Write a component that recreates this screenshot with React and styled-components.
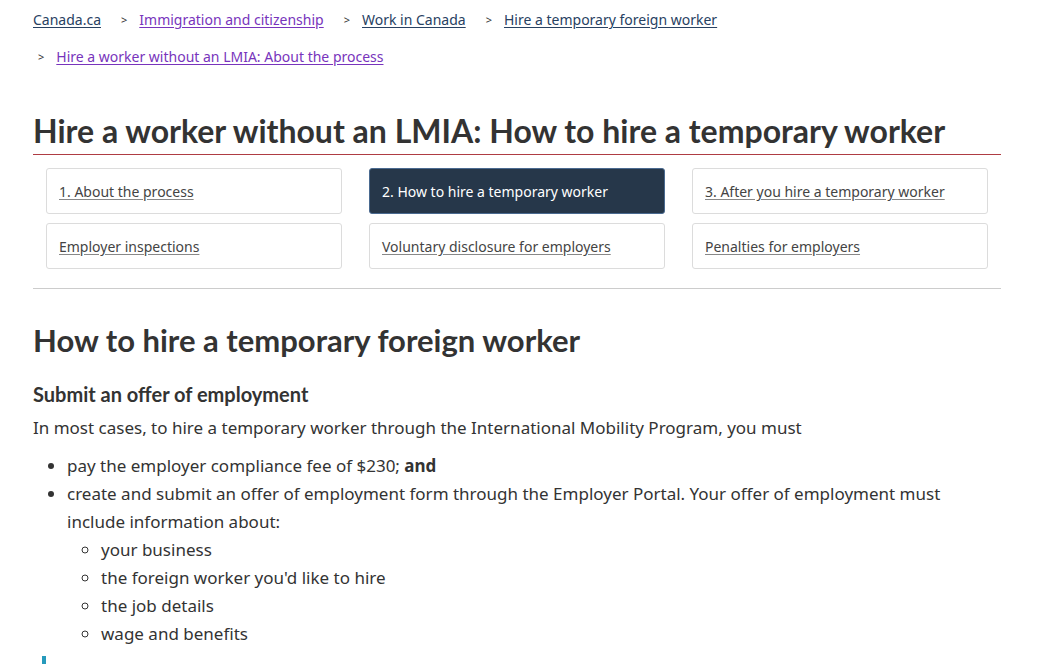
import React from 'react';
import styled, { createGlobalStyle } from 'styled-components';

const GlobalStyle = createGlobalStyle`
  body {
    margin: 0;
    background: #fff;
    font-family: "Noto Sans", "Liberation Sans", sans-serif;
    color: #333;
  }
`;

const Page = styled.div`
  width: 968px;
  margin-left: 33px;
  padding-top: 10px;
`;

const Breadcrumbs = styled.ol`
  list-style: none;
  margin: 0;
  padding: 0;
  display: flex;
  flex-wrap: wrap;
  column-gap: 15px;
  row-gap: 17px;
  font-size: 14px;
  line-height: 20px;
`;

const Crumb = styled.li`
  display: flex;
  align-items: center;
  &:not(:first-child)::before {
    content: '>';
    color: #333;
    font-size: 11px;
    margin: 0 12px 0 5px;
  }
  a {
    color: ${p => (p.visited ? '#7834bc' : '#284162')};
    text-decoration: underline;
    text-underline-offset: 2px;
  }
`;

const Title = styled.h1`
  font-family: Lato, "Noto Sans", sans-serif;
  font-weight: 700;
  font-size: 32px;
  line-height: 38px;
  color: #333;
  margin: 45px 0 0;
  padding-bottom: 4px;
  border-bottom: 1px solid #af3c43;
`;

const TabGrid = styled.div`
  display: grid;
  grid-template-columns: repeat(3, 1fr);
  column-gap: 27px;
  row-gap: 9px;
  margin: 13px 13px 0;
`;

const Tab = styled.a`
  display: flex;
  align-items: center;
  height: 46px;
  box-sizing: border-box;
  padding: 0 12px;
  font-size: 14px;
  border-radius: 3px;
  border: 1px solid ${p => (p.active ? '#4a6a90' : '#dcdcdc')};
  background: ${p => (p.active ? '#26374a' : '#fff')};
  color: ${p => (p.active ? '#fff' : '#444')};
  text-decoration: ${p => (p.active ? 'none' : 'underline')};
  text-decoration-color: #888;
  text-underline-offset: 2px;
`;

const Rule = styled.hr`
  border: 0;
  border-top: 1px solid #ccc;
  margin: 19px 0 0;
`;

const Heading = styled.h2`
  font-family: Lato, "Noto Sans", sans-serif;
  font-weight: 700;
  font-size: 31px;
  line-height: 38px;
  color: #333;
  margin: 32px 0 0;
`;

const SubHeading = styled.h3`
  font-family: Lato, "Noto Sans", sans-serif;
  font-weight: 700;
  font-size: 20px;
  line-height: 24px;
  color: #333;
  margin: 23px 0 0;
`;

const Para = styled.p`
  font-size: 17px;
  line-height: 28px;
  margin: 8px 0 0;
`;

const List = styled.ul`
  margin: ${p => (p.nested ? '0' : '10px 0 0')};
  padding-left: 34px;
  list-style: ${p => (p.nested ? 'circle' : 'disc')};
  font-size: 17px;
  line-height: 28px;
`;

const Item = styled.li`
  padding-left: 0;
`;

const InfoBox = styled.div`
  margin: 8px 0 0 9px;
  border-left: 4px solid #269abc;
  height: 40px;
`;

export default function App() {
  return (
    <Page>
      <GlobalStyle />
      <Breadcrumbs>
        <Crumb><a href="#">Canada.ca</a></Crumb>
        <Crumb visited><a href="#">Immigration and citizenship</a></Crumb>
        <Crumb><a href="#">Work in Canada</a></Crumb>
        <Crumb><a href="#">Hire a temporary foreign worker</a></Crumb>
        <Crumb visited><a href="#">Hire a worker without an LMIA: About the process</a></Crumb>
      </Breadcrumbs>

      <Title>Hire a worker without an LMIA: How to hire a temporary worker</Title>

      <TabGrid>
        <Tab href="#">1. About the process</Tab>
        <Tab active>2. How to hire a temporary worker</Tab>
        <Tab href="#">3. After you hire a temporary worker</Tab>
        <Tab href="#">Employer inspections</Tab>
        <Tab href="#">Voluntary disclosure for employers</Tab>
        <Tab href="#">Penalties for employers</Tab>
      </TabGrid>

      <Rule />

      <Heading>How to hire a temporary foreign worker</Heading>
      <SubHeading>Submit an offer of employment</SubHeading>
      <Para>In most cases, to hire a temporary worker through the International Mobility Program, you must</Para>
      <List>
        <Item>pay the employer compliance fee of $230; <strong>and</strong></Item>
        <Item>
          create and submit an offer of employment form through the Employer Portal. Your offer of employment must include information about:
          <List nested>
            <Item>your business</Item>
            <Item>the foreign worker you'd like to hire</Item>
            <Item>the job details</Item>
            <Item>wage and benefits</Item>
          </List>
        </Item>
      </List>
      <InfoBox />
    </Page>
  );
}
